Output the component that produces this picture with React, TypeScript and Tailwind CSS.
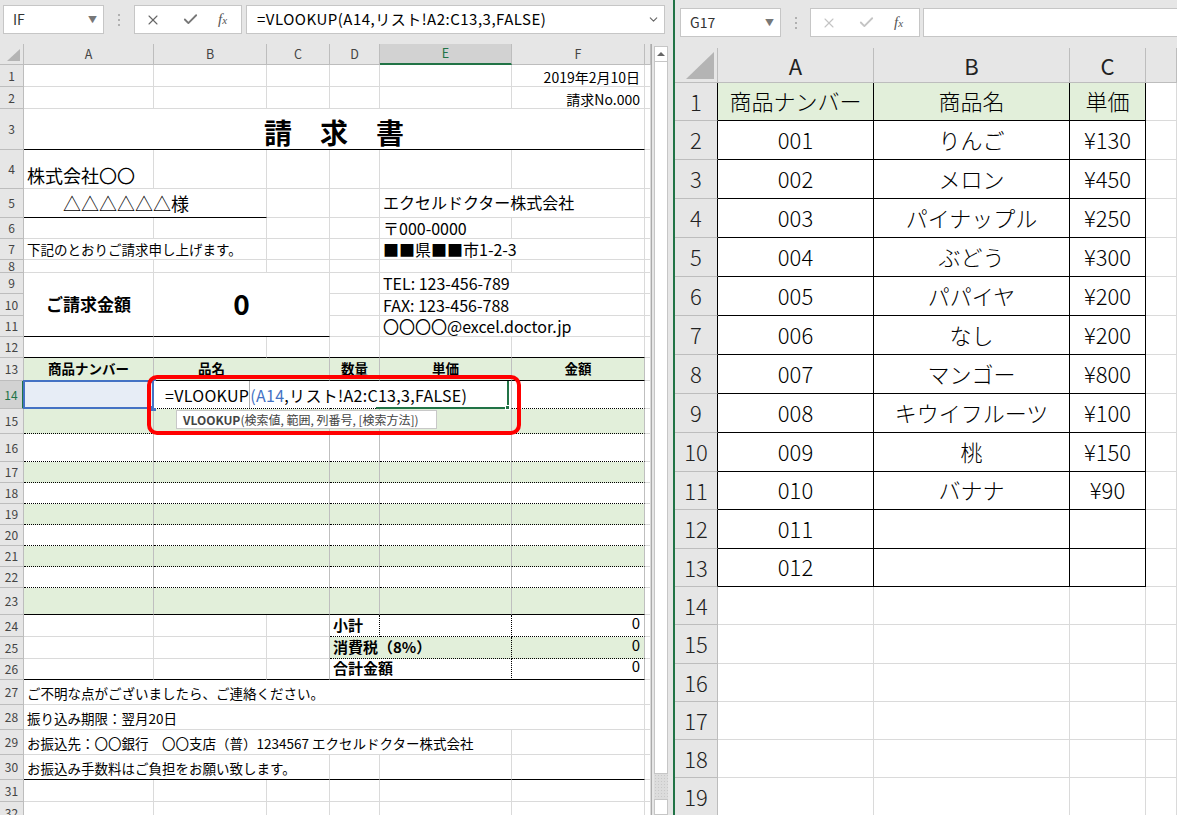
import React from "react";
import clsx from "clsx";
import { twMerge } from "tailwind-merge";
import { X, Check, ChevronDown } from "lucide-react";

const JP = "font-['Noto_Sans_CJK_JP',sans-serif]";

const cx = (...a: Parameters<typeof clsx>) => twMerge(clsx(...a));

type CellProps = { c?: string; children?: React.ReactNode };

function Cell({ c = "", children }: CellProps) {
  const cls = cx(
    "flex min-w-0 items-end whitespace-nowrap border-b border-r border-[#dadada] pb-[2px] text-black",
    c
  );
  return <div className={`${cls} leading-none`}>{children}</div>;
}

function RowHead({ n, active = false }: { n: number; active?: boolean }) {
  return (
    <div
      className={clsx(
        "flex items-center justify-center border-b border-r border-[#bdbdbd] text-[12px] leading-none",
        active ? "border-r-2 border-r-[#217346] bg-[#d2d2d2] text-[#217346]" : "bg-[#e6e6e6] text-[#444]"
      )}
    >
      {n}
    </div>
  );
}

function ColHead({ l, active = false }: { l: string; active?: boolean }) {
  return (
    <div
      className={clsx(
        "flex items-center justify-center border-r border-[#bdbdbd] text-[12.5px] leading-none",
        active ? "border-b-2 border-b-[#217346] bg-[#d2d2d2] text-[#217346]" : "border-b bg-[#e6e6e6] text-[#444]"
      )}
    >
      {l}
    </div>
  );
}

function Corner({ size }: { size: string }) {
  return (
    <div className="flex items-end justify-end border-b border-r border-[#bdbdbd] bg-[#e6e6e6] p-[3px]">
      <div className={clsx("bg-[#b4b4b4] [clip-path:polygon(100%_0,100%_100%,0_100%)]", size)} />
    </div>
  );
}

function Toolbar({ name, formula, dim }: { name: string; formula: string; dim?: boolean }) {
  return (
    <div className={clsx("flex items-start bg-[#e6e6e6]", dim ? "h-[48px] pl-[5px] pt-[8px]" : "h-[44px] pl-[3px] pt-[5px]")}>
      <div className="flex h-[29px] w-[101px] items-center justify-between border border-[#c6c6c6] bg-white pl-[9px] pr-[6px] text-[14px] text-[#333]">
        <span>{name}</span>
        <span className="text-[9px] text-[#777]">▼</span>
      </div>
      <div className="ml-[14px] flex h-[29px] flex-col items-center justify-center gap-[3px]">
        <span className="h-[2px] w-[2px] bg-[#b0b0b0]" />
        <span className="h-[2px] w-[2px] bg-[#b0b0b0]" />
        <span className="h-[2px] w-[2px] bg-[#b0b0b0]" />
      </div>
      <div
        className={clsx(
          "flex h-[29px] items-center border border-[#c6c6c6] bg-white",
          dim ? "ml-[13px] w-[110px]" : "ml-[14px] w-[108px]"
        )}
      >
        <X size={16} strokeWidth={1.6} className={clsx("ml-[10px]", dim ? "text-[#c4c4c4]" : "text-[#666]")} />
        <Check size={17} strokeWidth={2.6} className={clsx("ml-[21px]", dim ? "text-[#c4c4c4]" : "text-[#777]")} />
        <span className="ml-[19px] font-['Liberation_Serif',serif] text-[15px] italic text-[#555]">
          f<span className="text-[11px]">x</span>
        </span>
      </div>
      <div
        className={clsx(
          "flex h-[29px] items-center justify-between border border-[#c6c6c6] bg-white pl-[10px] pr-[4px] text-[15px] text-black",
          dim ? "ml-[3px] flex-1 border-r-0" : "ml-[4px] w-[419px]"
        )}
      >
        <span className={clsx(JP, "tracking-[0.5px]")}>{formula}</span>
        {!dim && <ChevronDown size={13} className="text-[#666]" />}
      </div>
    </div>
  );
}

const dotB = "[border-bottom-style:dotted] border-b-black";
const dotR = "[border-right-style:dotted] border-r-black";
const tv = "border-r-[#bfbfbf]";
const green = "bg-[#e2efda]";
const head = "items-center justify-center border-b-black pb-0 text-[13.5px] font-bold";

function LeftSheet() {
  const body = [14, 15, 16, 17, 18, 19, 20, 21, 22, 23];
  return (
    <div className={clsx("relative h-full w-[652px] overflow-hidden border-r border-[#ababab] bg-white", JP)}>
      <div className="grid grid-cols-[24px_130px_113px_63px_50px_132px_133px_6px] grid-rows-[21px_22px_22px_41px_39px_29px_21px_21px_13px_21px_22px_21px_21px_23px_28px_25px_28px_21px_21px_21px_21px_21px_21px_27px_22px_22px_21px_25px_25px_25px_25px_22px_22px]">
        <Corner size="h-[12px] w-[13px]" />
        <ColHead l="A" />
        <ColHead l="B" />
        <ColHead l="C" />
        <ColHead l="D" />
        <ColHead l="E" active />
        <ColHead l="F" />
        <ColHead l="" />

        {/* 1-2 */}
        <RowHead n={1} />
        <Cell /><Cell /><Cell /><Cell /><Cell />
        <Cell c="justify-end pr-[4px] text-[14px]">2019年2月10日</Cell>
        <Cell />
        <RowHead n={2} />
        <Cell /><Cell /><Cell /><Cell /><Cell />
        <Cell c="justify-end pr-[4px] text-[14px]">請求No.000</Cell>
        <Cell />

        {/* 3 title */}
        <RowHead n={3} />
        <Cell c="col-span-6 justify-center border-b-black pb-[3px] text-[28px] font-bold">請　求　書</Cell>
        <Cell />

        {/* 4 */}
        <RowHead n={4} />
        <Cell c="pl-[3px] pb-[4px] text-[18px]">株式会社〇〇</Cell>
        <Cell /><Cell /><Cell /><Cell /><Cell /><Cell />

        {/* 5 */}
        <RowHead n={5} />
        <Cell c="col-span-2 border-b-black pl-[39px] pb-[5px] text-[18px]">△△△△△△様</Cell>
        <Cell /><Cell />
        <Cell c="col-span-2 pl-[3px] pb-[7px] text-[16px]">エクセルドクター株式会社</Cell>
        <Cell />

        {/* 6 */}
        <RowHead n={6} />
        <Cell /><Cell /><Cell /><Cell />
        <Cell c="pl-[3px] pb-[2px] text-[16px]">〒000-0000</Cell>
        <Cell /><Cell />

        {/* 7 */}
        <RowHead n={7} />
        <Cell c="col-span-2 pl-[3px] pb-[3px] text-[13.5px]">下記のとおりご請求申し上げます。</Cell>
        <Cell /><Cell />
        <Cell c="col-span-2 pl-[3px] pb-[2px] text-[16px]">■■県■■市1-2-3</Cell>
        <Cell />

        {/* 8 */}
        <RowHead n={8} />
        <Cell /><Cell /><Cell /><Cell /><Cell /><Cell /><Cell />

        {/* 9-11 */}
        <RowHead n={9} />
        <Cell c="row-span-3 items-center justify-center border-b-black pb-[2px] text-[17px] font-bold">ご請求金額</Cell>
        <Cell c="col-span-2 row-span-3 items-center justify-center border-b-black pb-[4px] text-[28px] font-bold">0</Cell>
        <Cell />
        <Cell c="col-span-2 pl-[3px] pb-[2px] text-[16px]">TEL: 123-456-789</Cell>
        <Cell />
        <RowHead n={10} />
        <Cell />
        <Cell c="col-span-2 pl-[3px] pb-[2px] text-[16px]">FAX: 123-456-788</Cell>
        <Cell />
        <RowHead n={11} />
        <Cell />
        <Cell c="col-span-2 pl-[3px] pb-[2px] text-[16px]">〇〇〇〇@excel.doctor.jp</Cell>
        <Cell />

        {/* 12 */}
        <RowHead n={12} />
        <Cell c="border-b-black" /><Cell c="border-b-black" /><Cell c="border-b-black" />
        <Cell c="border-b-black" /><Cell c="border-b-black" /><Cell c="border-b-black" />
        <Cell />

        {/* 13 header */}
        <RowHead n={13} />
        <Cell c={cx(green, tv, head)}>商品ナンバー</Cell>
        <Cell c={cx(green, tv, head, "col-span-2 justify-start pl-[44px]")}>品名</Cell>
        <Cell c={cx(green, tv, head)}>数量</Cell>
        <Cell c={cx(green, tv, head)}>単価</Cell>
        <Cell c={cx(green, tv, head)}>金額</Cell>
        <Cell />

        {/* 14-23 lines */}
        {body.map((n) => {
          const bg = n % 2 === 1 ? green : "bg-white";
          const line = n === 23 ? "border-b-black" : dotB;
          return (
            <React.Fragment key={n}>
              <RowHead n={n} active={n === 14} />
              <Cell c={cx(bg, line, tv)} />
              <Cell c={cx(bg, line, tv, "col-span-2")} />
              <Cell c={cx(bg, line, tv)} />
              <Cell c={cx(bg, line, tv)} />
              <Cell c={cx(bg, line, tv)} />
              <Cell />
            </React.Fragment>
          );
        })}

        {/* 24-26 totals */}
        <RowHead n={24} />
        <Cell /><Cell /><Cell c={tv} />
        <Cell c={cx(dotB, dotR, "pl-[3px] pb-[4px] text-[15px] font-bold")}>小計</Cell>
        <Cell c={cx(dotB, dotR)} />
        <Cell c={cx(dotB, tv, "justify-end pr-[4px] pb-[6px] text-[15px]")}>0</Cell>
        <Cell />
        <RowHead n={25} />
        <Cell /><Cell /><Cell c={tv} />
        <Cell c={cx(green, dotB, dotR, "col-span-2 pl-[3px] pb-[4px] text-[15px] font-bold")}>消費税（8%）</Cell>
        <Cell c={cx(green, dotB, tv, "justify-end pr-[4px] pb-[6px] text-[15px]")}>0</Cell>
        <Cell />
        <RowHead n={26} />
        <Cell c="border-b-black" /><Cell c="border-b-black" /><Cell c={cx(tv, "border-b-black")} />
        <Cell c={cx(dotR, "col-span-2 border-b-black pl-[3px] pb-[4px] text-[15px] font-bold")}>合計金額</Cell>
        <Cell c={cx(tv, "justify-end border-b-black pr-[4px] pb-[6px] text-[15px]")}>0</Cell>
        <Cell />

        {/* 27-30 notes */}
        <RowHead n={27} />
        <Cell c="col-span-6 pl-[3px] pb-[4px] text-[13.5px]">ご不明な点がございましたら、ご連絡ください。</Cell>
        <Cell />
        <RowHead n={28} />
        <Cell c="col-span-6 pl-[3px] pb-[4px] text-[13.5px]">振り込み期限：翌月20日</Cell>
        <Cell />
        <RowHead n={29} />
        <Cell c="col-span-5 pl-[3px] pb-[4px] text-[13.5px]">お振込先：〇〇銀行　〇〇支店（普）1234567 エクセルドクター株式会社</Cell>
        <Cell /><Cell />
        <RowHead n={30} />
        <Cell c="col-span-3 border-b-black pl-[3px] pb-[4px] text-[13.5px]">お振込み手数料はご負担をお願い致します。</Cell>
        <Cell c="border-b-black" /><Cell c="border-b-black" /><Cell c="border-b-black" />
        <Cell />

        {[31, 32].map((n) => (
          <React.Fragment key={n}>
            <RowHead n={n} />
            <Cell /><Cell /><Cell /><Cell /><Cell /><Cell /><Cell />
          </React.Fragment>
        ))}
      </div>

      {/* A14 reference highlight */}
      <div className="absolute left-[23px] top-[336px] h-[29px] w-[131px] border-2 border-[#4472c4] bg-[#e7edf6]" />
      <div className="absolute left-[151px] top-[334px] h-[5px] w-[5px] bg-[#4472c4]" />
      <div className="absolute left-[151px] top-[362px] h-[5px] w-[5px] bg-[#4472c4]" />

      {/* in-cell editor */}
      <div className="absolute left-[154px] top-[337px] flex h-[27px] w-[353px] items-center bg-white pl-[11px] text-[16px] leading-none tracking-[0.3px]">
        <span>=VLOOKUP</span>
        <span className="h-[27px] w-px bg-[#b0b0b0]" />
        <span className="text-[#4472c4]">(A14</span>
        <span>,リスト!A2:C13,3,FALSE)</span>
      </div>
      <div className="absolute left-[376px] top-[363px] h-[2px] w-[133px] bg-[#217346]" />
      <div className="absolute left-[507px] top-[337px] h-[28px] w-[2px] bg-[#217346]" />
      <div className="absolute left-[505px] top-[361px] h-[5px] w-[5px] border border-white bg-[#217346]" />

      {/* function tooltip */}
      <div className="absolute left-[176px] top-[366px] flex h-[19px] w-[261px] items-center border border-[#c8c8c8] bg-white pl-[6px] text-[12px] leading-none text-[#444]">
        <span className="font-bold">VLOOKUP</span>
        <span>(検索値, 範囲, 列番号, [検索方法])</span>
      </div>

      {/* red callout */}
      <div className="absolute left-[147px] top-[331px] h-[60px] w-[374px] rounded-[10px] border-4 border-[#ff0000]" />
    </div>
  );
}

function ScrollBar() {
  return (
    <div className="ml-[2px] flex w-[14px] flex-col pt-[2px]">
      <div className="flex h-[16px] items-center justify-center border border-[#c6c6c6] bg-white">
        <div className="h-0 w-0 border-x-[4px] border-b-[4px] border-x-transparent border-b-[#666]" />
      </div>
      <div className="h-[721px] border-x border-b border-[#c6c6c6] bg-white" />
      <div className="h-[25px] bg-[#dcdcdc] [background-image:radial-gradient(#c8c8c8_1px,transparent_1px)] [background-size:3px_3px]" />
      <div className="h-[16px] border border-[#c6c6c6] bg-white" />
    </div>
  );
}

const items = [
  ["001", "りんご", "¥130"],
  ["002", "メロン", "¥450"],
  ["003", "パイナップル", "¥250"],
  ["004", "ぶどう", "¥300"],
  ["005", "パパイヤ", "¥200"],
  ["006", "なし", "¥200"],
  ["007", "マンゴー", "¥800"],
  ["008", "キウイフルーツ", "¥100"],
  ["009", "桃", "¥150"],
  ["010", "バナナ", "¥90"],
  ["011", "", ""],
  ["012", "", ""],
];

function RightSheet() {
  const rows = Array.from({ length: 19 }, (_, i) => i + 1);
  return (
    <div className={clsx("grid grid-cols-[43px_156px_196px_76px_1fr] grid-rows-[35px_38px_39px_39px_39px_39px_39px_39px_39px_39px_39px_38px_39px_38px_38px_39px_38px_38px_38px_38px] bg-white", JP)}>
      <Corner size="h-[27px] w-[28px]" />
      {["A", "B", "C", ""].map((l) => (
        <div key={l} className="flex items-center justify-center border-b border-r border-[#bdbdbd] bg-[#e6e6e6] text-[22px] leading-none text-[#222]">
          {l}
        </div>
      ))}
      {rows.map((n) => {
        const inTable = n <= 13;
        const data = n === 1 ? ["商品ナンバー", "商品名", "単価"] : items[n - 2] ?? ["", "", ""];
        const cell = inTable ? clsx("border-black", n === 1 ? green : "bg-white") : "border-[#dadada]";
        return (
          <React.Fragment key={n}>
            <div
              className={clsx(
                "flex items-center justify-center border-b border-r bg-[#e6e6e6] pb-[2px] text-[22px] font-light leading-none text-[#222]",
                inTable ? "border-b-[#bdbdbd] border-r-black" : "border-[#bdbdbd]"
              )}
            >
              {n}
            </div>
            {[0, 1, 2].map((k) => (
              <div key={k} className={clsx("flex items-center justify-center border-b border-r pb-[3px] text-[22px] font-light leading-none text-black", cell)}>
                {inTable ? data[k] : ""}
              </div>
            ))}
            <div className="border-b border-r border-[#dadada]" />
          </React.Fragment>
        );
      })}
    </div>
  );
}

export default function App() {
  return (
    <div className="flex h-[815px] w-[1177px] overflow-hidden bg-[#e6e6e6] font-['Noto_Sans_CJK_JP',sans-serif]">
      <div className="flex w-[673px] flex-col">
        <Toolbar name="IF" formula="=VLOOKUP(A14,リスト!A2:C13,3,FALSE)" />
        <div className="flex min-h-0 flex-1">
          <LeftSheet />
          <ScrollBar />
        </div>
      </div>
      <div className="w-[2px] bg-[#217346]" />
      <div className="flex min-w-0 flex-1 flex-col">
        <Toolbar name="G17" formula="" dim />
        <div className="min-h-0 flex-1 overflow-hidden">
          <RightSheet />
        </div>
      </div>
    </div>
  );
}
